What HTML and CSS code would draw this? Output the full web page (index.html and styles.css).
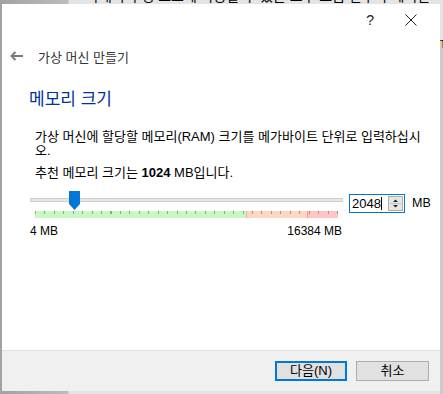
FILE: index.html
```html
<!DOCTYPE html>
<html lang="ko">
<head>
<meta charset="utf-8">
<link rel="stylesheet" href="styles.css">
</head>
<body>
<div class="desktop">
  <div class="backdrop-text">사태의 구성 요소에 사용할 수 있는 도구 모음 단추와 제어판</div>
  <div class="backdrop-edge">T</div>
  <div class="dialog">
    <div class="titlebar">
      <span class="help">?</span>
      <svg class="close" width="12" height="12" viewBox="0 0 12 12"><path d="M0.5 0.5 L11.5 11.5 M11.5 0.5 L0.5 11.5" stroke="#222" stroke-width="1" fill="none"/></svg>
    </div>
    <div class="header">
      <svg class="back" width="13" height="10" viewBox="0 0 13 10"><path d="M13 5 H1.5 M5.5 1 L1.5 5 L5.5 9" stroke="#7a7a7a" stroke-width="2" fill="none"/></svg>
      <span class="header-title">가상 머신 만들기</span>
    </div>
    <div class="content">
      <h1 class="heading">메모리 크기</h1>
      <p class="desc">가상 머신에 할당할 메모리(RAM) 크기를 메가바이트 단위로 입력하십시<br>오.</p>
      <p class="desc rec">추천 메모리 크기는 <b>1024</b> MB입니다.</p>
      <div class="slider-row">
        <div class="slider">
          <div class="track">
            <svg class="thumb" width="11" height="19" viewBox="0 0 11 19"><path d="M0 0 H11 V13 L5.5 19 L0 13 Z" fill="#0078d7"/></svg>
          </div>
          <div class="ticks">
            <div class="zone green"></div>
            <div class="zone peach"></div>
            <div class="zone pink"></div>
          </div>
          <div class="labels"><span>4 MB</span><span>16384 MB</span></div>
        </div>
        <div class="spinbox">
          <span class="spin-value">2048<span class="caret"></span></span>
          <div class="spin-btns">
            <svg width="13" height="15" viewBox="0 0 13 15"><path d="M4 6 L6.5 3.5 L9 6 Z" fill="#222"/><path d="M4 9 L6.5 11.5 L9 9 Z" fill="#222"/><path d="M1 7.5 H12" stroke="#bdbdbd" stroke-width="1"/></svg>
          </div>
        </div>
        <span class="unit">MB</span>
      </div>
    </div>
    <div class="footer">
      <button class="btn primary">다음(N)</button>
      <button class="btn">취소</button>
    </div>
  </div>
</div>
</body>
</html>
```
FILE: styles.css
```css
* { box-sizing: border-box; }
html, body { margin: 0; padding: 0; }
body {
  width: 443px;
  height: 394px;
  overflow: hidden;
  font-family: "Liberation Sans", "Noto Sans CJK KR", sans-serif;
  font-size: 12px;
  color: #000;
}
.desktop {
  position: relative;
  width: 443px;
  height: 394px;
  background: linear-gradient(to right, #a2a2a2 0, #bcbcbc 68px, #e4e4e4 69px, #e4e4e4 100%);
  overflow: hidden;
}
.backdrop-text {
  position: absolute;
  left: 86px;
  top: -12px;
  font-size: 14px;
  line-height: 16px;
  white-space: nowrap;
  color: #000;
}
.backdrop-edge {
  position: absolute;
  left: 440px;
  top: 40px;
  width: 3px;
  height: 354px;
  background: #cbcbcb;
  font-size: 10px;
  line-height: 10px;
  overflow: hidden;
  color: #000;
}
.dialog {
  position: absolute;
  left: 2px;
  top: 4px;
  width: 438px;
  height: 387px;
  background: #fff;
  display: flex;
  flex-direction: column;
}
.titlebar {
  height: 30px;
  display: flex;
  align-items: center;
  justify-content: flex-end;
  padding-right: 23px;
}
.help {
  font-size: 14px;
  color: #222;
  margin-right: 31px;
  margin-top: 1px;
}
.close { display: block; margin-top: 1px; }
.header {
  height: 44px;
  display: flex;
  align-items: center;
  padding-left: 8px;
}
.back { display: block; margin-right: 15px; }
.header-title {
  color: #333;
  font-size: 13px;
}
.content {
  flex: 1;
  padding-left: 27px;
}
.heading {
  margin: 11px 0 0 0;
  font-weight: normal;
  font-size: 17px;
  line-height: 22px;
  color: #003399;
}
.desc {
  margin: 19px 0 0 6px;
  font-size: 13px;
  line-height: 14px;
  white-space: nowrap;
}
.desc.rec { margin-top: 8px; }
.desc b { font-weight: bold; }
.slider-row {
  display: flex;
  align-items: flex-start;
  margin-top: 14px;
  margin-left: 1px;
}
.slider {
  width: 313px;
  padding-top: 4px;
}
.track {
  position: relative;
  height: 4px;
  background: #e7e7e7;
  border: 1px solid #cfcfcf;
}
.thumb {
  position: absolute;
  left: 38px;
  top: -8px;
}
.ticks {
  margin: 9px 0 0 5px;
  width: 303px;
  height: 7px;
  display: flex;
  position: relative;
}
.ticks::after {
  content: "";
  position: absolute;
  left: 0;
  top: 0;
  width: 303px;
  height: 3px;
  background: repeating-linear-gradient(to right, #9a9a9a 0 1px, transparent 1px 9.4375px);
}
.zone { height: 7px; }
.green { width: 211px; background: #c8f8c2; }
.peach { width: 61px; background: #ffd6c2; border-left: 1px solid #e8b898; }
.pink { width: 31px; background: #ffc4c4; border-left: 1px solid #f09a9a; }
.labels {
  display: flex;
  justify-content: space-between;
  margin-top: 6px;
  line-height: 14px;
  padding-right: 1px;
}
.spinbox {
  margin-left: 6px;
  width: 56px;
  height: 19px;
  border: 1px solid #0078d7;
  background: #fff;
  display: flex;
  align-items: center;
  justify-content: space-between;
  padding: 0 1px 0 2px;
}
.spin-value {
  font-size: 13px;
  line-height: 15px;
  display: flex;
  align-items: center;
}
.caret {
  display: inline-block;
  width: 1px;
  height: 13px;
  background: #000;
}
.spin-btns {
  width: 15px;
  height: 15px;
  border: 1px solid #adadad;
  background: #e6e6e6;
  display: flex;
  align-items: center;
  justify-content: center;
}
.spin-btns svg { display: block; }
.unit {
  margin-left: 7px;
  font-size: 12.5px;
  line-height: 19px;
}
.footer {
  height: 41px;
  background: #f0f0f0;
  border-top: 1px solid #dfdfdf;
  display: flex;
  justify-content: flex-end;
  align-items: flex-start;
  padding: 10px 11px 0 0;
  gap: 9px;
}
.btn {
  width: 73px;
  height: 20px;
  margin: 0;
  padding: 0;
  background: #e1e1e1;
  border: 1px solid #adadad;
  font-family: "Liberation Sans", "Noto Sans CJK KR", sans-serif;
  font-size: 13px;
  color: #000;
  line-height: 16px;
}
.btn.primary {
  width: 72px;
  border: 2px solid #0078d7;
}
```
